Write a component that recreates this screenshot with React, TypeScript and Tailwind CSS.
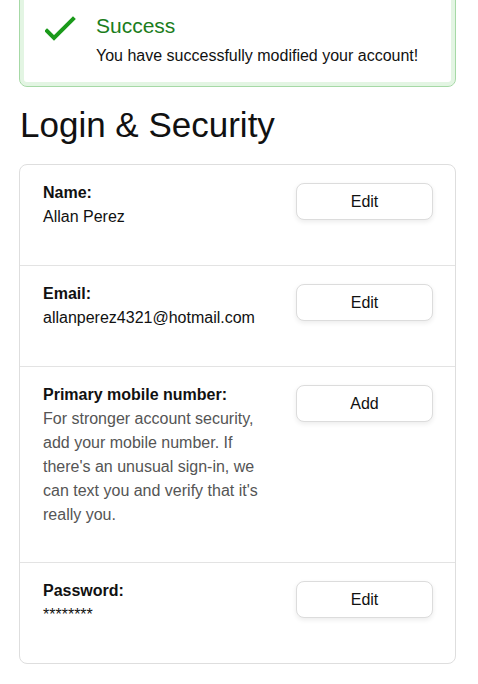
import { FC } from "react";

type Setting = {
  label: string;
  value: string;
  action: string;
  muted?: boolean;
};

const settings: Setting[] = [
  { label: "Name:", value: "Allan Perez", action: "Edit" },
  { label: "Email:", value: "allanperez4321@hotmail.com", action: "Edit" },
  {
    label: "Primary mobile number:",
    value:
      "For stronger account security, add your mobile number. If there's an unusual sign-in, we can text you and verify that it's really you.",
    action: "Add",
    muted: true,
  },
  { label: "Password:", value: "********", action: "Edit" },
];

const CheckIcon: FC = () => (
  <svg width="32" height="26" viewBox="0 0 32 26" className="shrink-0 mt-[3px]">
    <path
      d="M2 15 L9 22 L28 3"
      fill="none"
      stroke="#1a9a1a"
      strokeWidth="4"
      strokeLinecap="square"
    />
  </svg>
);

const App: FC = () => {
  return (
    <div className="min-h-[684px] bg-white font-['Liberation_Sans',Arial,sans-serif] text-[#111]">
      <div className="ml-[19px] w-[437px]">
        {/* alert banner */}
        <div className="-mt-[12px] flex gap-[19px] rounded-lg border border-[#a6d9a6] bg-white pl-[25px] pt-[24px] pb-[18px] shadow-[inset_0_0_0_4px_#e3f5e3]">
          <CheckIcon />
          <div>
            <div className="text-[21px] leading-[25px] text-[#1b7d1b]">Success</div>
            <p className="mt-[6px] text-[16px] leading-[24px] text-[#111]">
              You have successfully modified your account!
            </p>
          </div>
        </div>

        <h1 className="mt-[18px] ml-px text-[35px] leading-[40px] text-[#111]">
          Login &amp; Security
        </h1>

        <div className="mt-[19px] rounded-lg border border-[#dedede]">
          {settings.map((item, i) => (
            <div
              key={item.label}
              className={
                "flex justify-between pl-[23px] pr-[22px] pt-4 " +
                (item.muted ? "pb-[35px] " : "pb-9 ") +
                (i < settings.length - 1 ? "border-b border-[#e3e3e3]" : "")
              }
            >
              <div className="w-[232px]">
                <div className="text-[16px] font-bold leading-[24px] text-[#111]">
                  {item.label}
                </div>
                <p
                  className={
                    item.muted
                      ? "text-[16px] leading-[24px] text-[#555]"
                      : "text-[16px] leading-[24px] text-[#111]"
                  }
                >
                  {item.value}
                </p>
              </div>
              <button className="mt-[2px] h-[37px] w-[137px] rounded-lg border border-[#dcdcdc] bg-white text-[16px] text-[#111] shadow-[0_2px_5px_rgba(0,0,0,0.08)]">
                {item.action}
              </button>
            </div>
          ))}
        </div>
      </div>
    </div>
  );
};

export default App;
